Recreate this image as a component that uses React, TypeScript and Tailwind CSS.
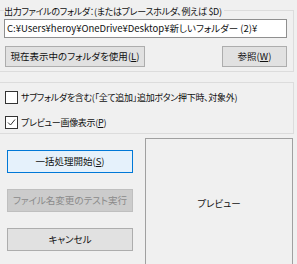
import React from 'react';

const font = "font-['Meiryo_UI','Noto_Sans_CJK_JP',sans-serif] [font-feature-settings:'palt']";

const WinButton: React.FC<{
  label: string;
  accel?: string;
  variant?: 'default' | 'primary' | 'disabled';
  className?: string;
}> = ({ label, accel, variant = 'default', className = '' }) => {
  const styles = {
    default: 'bg-[#e1e1e1] border-[#adadad] text-[#111]',
    primary: 'bg-[#e5f1fb] border-[#0078d7] text-[#111]',
    disabled: 'bg-[#cccccc] border-[#bfbfbf] text-[#8a8a8a]',
  }[variant];
  return (
    <button
      className={`flex items-center justify-center border text-[9.5px] leading-none ${styles} ${className}`}
    >
      {label}
      {accel && (
        <span>
          (<span className="underline underline-offset-1">{accel}</span>)
        </span>
      )}
    </button>
  );
};

const CheckBox: React.FC<{ checked?: boolean; label: string; accel?: string }> = ({
  checked,
  label,
  accel,
}) => (
  <label className="flex items-center h-[13px]">
    <span className="w-[13px] h-[13px] border border-[#333] bg-white flex items-center justify-center ml-[5px]">
      {checked && (
        <svg width="9" height="9" viewBox="0 0 9 9" fill="none">
          <path d="M1 4.5 L3.5 7 L8 1.5" stroke="#333" strokeWidth="1" />
        </svg>
      )}
    </span>
    <span className="ml-[3px] text-[9px] tracking-[-0.3px] leading-none text-[#111]">
      {label}
      {accel && (
        <>
          (<span className="underline underline-offset-1">{accel}</span>)
        </>
      )}
    </span>
  </label>
);

export default function App() {
  return (
    <div className={`w-[297px] h-[264px] bg-[#f0f0f0] overflow-hidden text-black flow-root ${font}`}>
      {/* Output folder group: caption sits on the top border */}
      <div className="mt-[10px] w-[294px] border-t border-r border-b border-[#dcdcdc] pl-[4px] pb-[4px]">
        <div className="-mt-[5px] w-fit bg-[#f0f0f0] pr-[2px] text-[9px] tracking-[-0.3px] leading-[12px] text-[#111]">
          出力ファイルのフォルダ：(またはプレースホルダ、例えば $D)
        </div>
        <div className="mt-[1px] w-[283px] h-[19px] border border-[#8f8f8f] bg-white flex items-center pl-[2px] text-[9.5px] leading-none text-[#111]">
          C:¥Users¥heroy¥OneDrive¥Desktop¥新しいフォルダー (2)¥
        </div>
        <div className="mt-[8px] flex justify-between w-[283px]">
          <WinButton label="現在表示中のフォルダを使用" accel="L" className="w-[140px] h-[21px] ml-[1px]" />
          <WinButton label="参照" accel="W" className="w-[65px] h-[21px]" />
        </div>
      </div>

      {/* Options group */}
      <div className="mt-[10px] w-[294px] border-t border-r border-b border-[#dcdcdc] pt-[8px] pb-[4px] flex flex-col gap-[12px]">
        <CheckBox label="サブフォルダを含む(「全て追加」追加ボタン押下時、対象外)" />
        <CheckBox checked label="プレビュー画像表示" accel="P" />
      </div>

      {/* Actions + preview */}
      <div className="mt-[4px] flex">
        <div className="pl-[7px] pt-[12px] flex flex-col gap-[16px]">
          <WinButton label="一括処理開始" accel="S" variant="primary" className="w-[126px] h-[23px]" />
          <WinButton label="ファイル名変更のテスト実行" variant="disabled" className="w-[126px] h-[23px]" />
          <WinButton label="キャンセル" className="w-[126px] h-[23px]" />
        </div>
        <div className="ml-[12px] w-[148px] h-[130px] border border-[#a0a0a0] flex items-center justify-center text-[9.5px] text-[#111]">
          プレビュー
        </div>
      </div>
    </div>
  );
}
